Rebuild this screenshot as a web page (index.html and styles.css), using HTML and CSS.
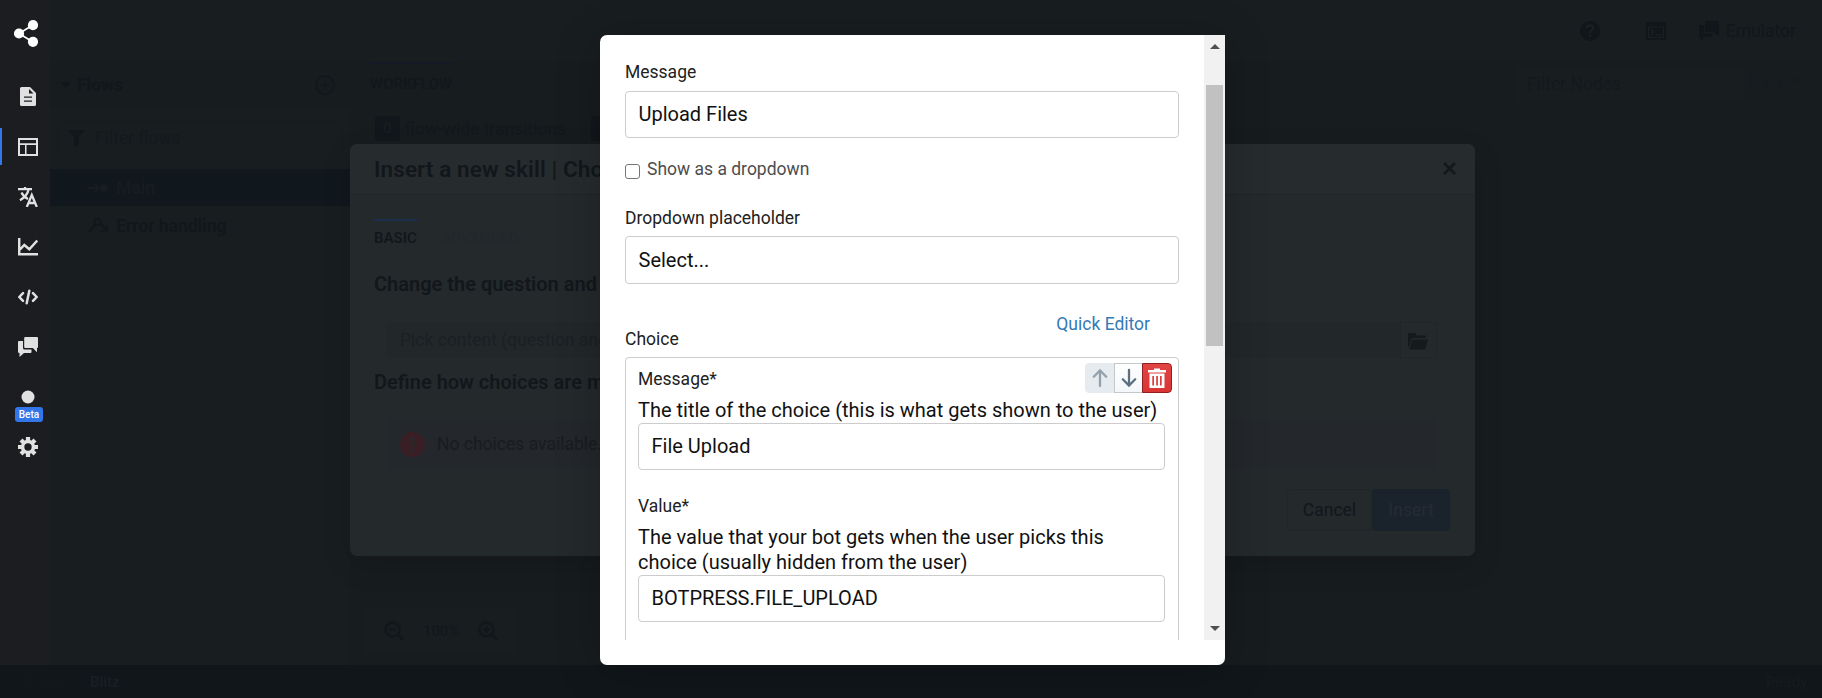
FILE: index.html
```html
<!DOCTYPE html>
<html lang="en">
<head>
<meta charset="utf-8">
<title>Flow editor</title>
<link rel="stylesheet" href="styles.css">
</head>
<body>
<div class="app">
  <div class="workspace">
    <nav class="sidebar">
      <div class="brand">
        <svg width="24" height="27" viewBox="0 0 24 27"><path d="M19 5 5 13.5l14 8.500" fill="none" stroke="#fff" stroke-width="1.700"/><circle cx="19" cy="5.200" r="5.100" fill="#fff"/><circle cx="5" cy="13.500" r="5.100" fill="#fff"/><circle cx="19" cy="21.800" r="5.100" fill="#fff"/></svg>
      </div>
      <a class="nav-item"><svg class="nav-icon" viewBox="0 0 20 20"><path fill-rule="evenodd" d="M3.500 0H12l6 6v11.500q0 1.500-1.500 1.500h-13Q2 19 2 17.500v-16Q2 0 3.500 0zM6 9.500v1.300h8V9.500zm0 4v1.300h8v-1.300z"/><path class="nav-hole" d="M11 2v4.500h4.500z"/></svg></a>
      <a class="nav-item active"><svg class="nav-icon" viewBox="0 0 20 20"><path fill-rule="evenodd" d="M0 1h20v18H0zM2 3v3.200h16V3zm0 5v9h5V8zm6.500 0v9H18V8z"/></svg></a>
      <a class="nav-item"><svg class="nav-icon" viewBox="0 0 20 20"><g fill="none" stroke="#e1e1e1" stroke-width="2.300"><path d="M0 2.200h14M7 0v2M2 13.200C6.500 10.500 9.800 7 10.500 2.500M3.500 5.500c1.300 3 3.500 5 6.500 6.500"/><path d="m8.800 20 5-12 5 12M10.500 16h6.500"/></g></svg></a>
      <a class="nav-item"><svg class="nav-icon" viewBox="0 0 20 20"><path fill="none" stroke="#e1e1e1" stroke-width="2.500" d="M1.200 1v16.300H20M2 12.500 6.300 8l5 4.300L19.300 3.500"/></svg></a>
      <a class="nav-item"><svg class="nav-icon" viewBox="0 0 20 20"><g fill="none" stroke="#e1e1e1" stroke-width="2.500" stroke-linecap="round" stroke-linejoin="round"><path d="M5 6.200 1.300 10 5 13.800M15 6.200 18.700 10 15 13.800M11.300 3.800 8.700 16.200"/></g></svg></a>
      <a class="nav-item"><svg class="nav-icon" viewBox="0 0 20 20"><path d="M7.200 0H19q1 0 1 1v9q0 1-1 1v4.200L14.800 11H7.200q-1 0-1-1V1q0-1 1-1z"/><path d="M1 4h4v7q0 1.500 1.500 1.500h7V15q0 1-1 1H6l-4.500 4V16Q0 16 0 15V5q0-1 1-1z"/></svg></a>
      <a class="nav-item"><svg class="nav-icon" viewBox="0 0 20 20"><circle cx="10" cy="10" r="6.500"/></svg><span class="beta">Beta</span></a>
      <a class="nav-item"><svg class="nav-icon" viewBox="0 0 20 20"><g stroke="#e1e1e1" stroke-width="4.200"><path d="M10 0v20M0 10h20M3 3l14 14M17 3 3 17"/></g><circle cx="10" cy="10" r="7.200"/><circle class="nav-hole" cx="10" cy="10" r="3.700"/></svg></a>
    </nav>
    <div class="content">
      <header class="topbar">
        <svg width="20" height="20" viewBox="0 0 20 20"><circle cx="10" cy="10" r="10" fill="#11161a"/><path d="M6.800 7.300c.2-4 6.600-3.700 6.400 0C13 9.300 10 9.500 10 12M10 13.500v2.500" fill="none" stroke="#1a1f23" stroke-width="2.200"/></svg>
        <svg width="20" height="20" viewBox="0 0 20 20"><path fill="#11161a" d="M0 1h20v18H0z"/><path fill="#1a1f23" fill-rule="evenodd" d="M2 5.500h16V17H2zm1 1V16h14V6.500z"/><path d="m4.500 8 3 3-3 3M10 14h6" fill="none" stroke="#1a1f23" stroke-width="1.700"/></svg>
        <div class="emulator"><svg width="20" height="20" viewBox="0 0 20 20" fill="#11161a"><path d="M7.200 0H20v15.200L14.800 11H6.200V0z"/><path d="M0 4h5v8.500h8.500V16H6l-4.500 4V16H0z"/></svg>Emulator</div>
      </header>
      <div class="columns">
        <aside class="flows">
          <div class="flows-head"><span class="caret"></span><b>Flows</b><svg width="20" height="20" viewBox="0 0 20 20"><g fill="none" stroke="#13181c" stroke-width="2"><circle cx="10" cy="10" r="9"/><path d="M10 5v10M5 10h10"/></g></svg></div>
          <div class="flow-filter"><svg width="18" height="17" viewBox="0 0 18 17"><path d="M0 0h18l-6 7v8l-5 2V7z" fill="#12171b"/></svg>Filter flows</div>
          <div class="flow-row selected"><svg width="20" height="12" viewBox="0 0 20 12"><path d="M0 6h11M7 2l4 4-4 4" fill="none" stroke="#171c20" stroke-width="2"/><circle cx="16" cy="6" r="4" fill="#171c20"/></svg>Main</div>
          <div class="flow-row"><svg width="20" height="16" viewBox="0 0 20 16"><path d="M1 14 7 7M12 5l6 7M19 7v6h-6" fill="none" stroke="#12171b" stroke-width="2"/><circle cx="9.500" cy="4" r="3" fill="none" stroke="#12171b" stroke-width="2"/></svg>Error handling</div>
        </aside>
        <main class="canvas">
          <div class="canvas-head"><span class="tab">WORKFLOW</span><div class="node-filter">Filter Nodes</div>
            <svg class="history" width="50" height="18" viewBox="0 0 50 18"><path d="M2 5h13q4 0 4 4t-4 4h-9M5 1 1 5l4 4M48 5H35q-4 0-4 4t4 4h9M45 1l4 4-4 4" fill="none" stroke="#161b1f" stroke-width="2"/></svg></div>
          <div class="transitions"><span class="count">0</span>flow-wide transitions<span class="count second">0</span></div>
          <div class="zoom">
            <svg width="20" height="20" viewBox="0 0 20 20"><g fill="none" stroke="#12171b" stroke-width="2.500"><circle cx="8.500" cy="8.500" r="7"/><path d="m13 13 6 6M5 8.500h7"/></g></svg><span>100%</span>
            <svg width="20" height="20" viewBox="0 0 20 20"><g fill="none" stroke="#12171b" stroke-width="2.500"><circle cx="8.500" cy="8.500" r="7"/><path d="m13 13 6 6M5 8.500h7M8.500 5v7"/></g></svg>
          </div>
        </main>
      </div>
    </div>
  </div>
  <footer class="statusbar"><span class="version">12.22.2</span><span class="bot">Blitz</span><span class="ready">Ready</span></footer>
</div>

<section class="skill">
  <header class="skill-head"><h2>Insert a new skill | Choice</h2><svg width="13" height="13" viewBox="0 0 13 13"><path d="m1 1 11 11M12 1 1 12" stroke="#13181b" stroke-width="2.700" fill="none"/></svg></header>
  <div class="skill-body">
    <div class="skill-tabs"><span class="skill-tab">BASIC</span><span class="skill-tab faint">ADVANCED</span></div>
    <h3>Change the question and the choices</h3>
    <div class="picker"><span class="picker-text">Pick content (question and choices)</span><span class="picker-button"><svg width="20" height="17" viewBox="0 0 20 17"><path d="M0 0h7l2 2.500h9V5H4L1 14H0z" fill="#151a1d"/><path d="M4.500 6.500H20L17 16.500H1.500z" fill="#151a1d"/></svg></span></div>
    <h3>Define how choices are matched</h3>
    <div class="alert"><svg width="25" height="25" viewBox="0 0 25 25"><circle cx="12.500" cy="12.500" r="12.500" fill="#391f25"/><path d="M12.500 5v10M12.500 17v3.500" stroke="#262a2e" stroke-width="3.500"/></svg>No choices available.</div>
    <div class="skill-actions"><span class="cancel">Cancel</span><span class="insert">Insert</span></div>
  </div>
</section>

<section class="modal">
  <div class="scroller">
    <form class="form">
      <label class="label">Message</label>
      <div class="input">Upload Files</div>
      <label class="check"><span class="box"></span>Show as a dropdown</label>
      <label class="label">Dropdown placeholder</label>
      <div class="input tall">Select...</div>
      <a class="quick">Quick Editor</a>
      <label class="label choice-label">Choice</label>
      <div class="choice">
        <div class="choice-head"><label class="label">Message*</label>
          <div class="tools">
            <span class="tool disabled"><svg width="20" height="20" viewBox="0 0 20 20"><path d="M10 18V3M3.800 8.800 10 2.500l6.200 6.300" fill="none" stroke="#93a1ac" stroke-width="2.300" stroke-linecap="round"/></svg></span>
            <span class="tool"><svg width="20" height="20" viewBox="0 0 20 20"><path d="M10 2v15M3.800 11.200 10 17.500l6.200-6.300" fill="none" stroke="#5c7080" stroke-width="2.300" stroke-linecap="round"/></svg></span>
            <span class="tool danger"><svg width="20" height="20" viewBox="0 0 20 20"><path fill="#fff" d="M1 2h6V.5h6V2h6v2.500H1z"/><path fill="#fff" fill-rule="evenodd" d="M2.500 5.500h15V20h-15zM5.300 8v9.500h1.700V8zm3.900 0v9.500h1.700V8zm3.800 0v9.500h1.700V8z"/></svg></span>
          </div>
        </div>
        <p class="hint">The title of the choice (this is what gets shown to the user)</p>
        <div class="input">File Upload</div>
        <label class="label value-label">Value*</label>
        <p class="hint">The value that your bot gets when the user picks this choice (usually hidden from the user)</p>
        <div class="input">BOTPRESS.FILE_UPLOAD</div>
      </div>
    </form>
    <div class="scrollbar"><span class="arrow up"></span><span class="thumb"></span><span class="arrow down"></span></div>
  </div>
</section>
</body>
</html>
```
FILE: styles.css
```css
* { box-sizing: border-box; }
body { margin: 0; width: 1822px; height: 698px; overflow: hidden; background: #181d20; font-family: Roboto, "Liberation Sans", sans-serif; font-size: 17.5px; color: #12171b; }
svg { display: block; flex: none; }
h2, h3, p { margin: 0; }
.app { display: flex; flex-direction: column; height: 698px; }
.workspace { display: flex; height: 665px; }
.sidebar { width: 50px; background: #1b1d21; flex: none; }
.brand { height: 72px; padding: 20px 0 0 14px; }
.nav-item { display: flex; align-items: center; position: relative; height: 37px; margin-bottom: 13px; padding-left: 15px; border-left: 3px solid transparent; }
.brand + .nav-item { margin-top: 6px; }
.nav-item.active { border-left-width: 2px; padding-left: 16px; border-color: #3276ea; }
.nav-icon { width: 20px; height: 20px; fill: #e1e1e1; }
.nav-hole { fill: #1b1d21; }
.beta { position: absolute; left: 12px; top: 29px; width: 28px; height: 15px; border-radius: 3px; background: #3276ea; color: #fff; font-size: 10px; font-weight: 500; line-height: 15px; text-align: center; }
.content { flex: 1; display: flex; flex-direction: column; }
.topbar { height: 62px; display: flex; justify-content: flex-end; align-items: center; padding-right: 26px; gap: 46px; }
.emulator { display: flex; align-items: center; gap: 7px; margin-left: -13px; }
.columns { flex: 1; display: flex; }
.flows { width: 300px; background: #181d20; }
.flows-head { display: flex; align-items: center; height: 45px; padding: 0 15px 0 11px; background: #171c1f; }
.flows-head svg { margin-left: auto; }
.caret { border: 5px solid transparent; border-top: 6px solid #11161a; border-bottom: 0; margin-right: 6px; }
.flow-filter { display: flex; align-items: center; gap: 10px; margin: 13px 7px 0 7px; height: 36px; padding-left: 9px; border: 1px solid #161b1e; border-radius: 4px; color: #14191c; }
.flow-row { display: flex; align-items: center; gap: 8px; height: 36px; padding-left: 38px; font-weight: 600; }
.flow-row svg { width: 20px; }
.flow-row.selected { margin-top: 13px; height: 37px; background: #10171d; color: #171c20; }
.flow-row + .flow-row:last-child { height: 40px; }
.canvas { flex: 1; background: #171c1f; }
.canvas-head { display: flex; align-items: flex-start; padding-left: 20px; height: 54px; }
.tab { width: 82px; padding-top: 9px; border-top: 2px solid #131a25; font-size: 15px; line-height: 22px; font-weight: 600; }
.node-filter { width: 228px; height: 36px; line-height: 36px; margin: 4px 5px 0 1063px; padding-left: 12px; background: #181d20; border-radius: 4px; color: #14191c; }
.history { margin-top: 13px; }
.transitions { display: flex; align-items: center; height: 25px; padding-left: 25px; gap: 5px; color: #13181b; }
.count { width: 25px; height: 25px; border-radius: 4px; background: #12171c; color: #181d21; text-align: center; line-height: 25px; font-weight: 500; font-size: 15px; }
.count.second { margin-left: 20px; }
.zoom { display: flex; align-items: center; gap: 19px; width: 150px; height: 45px; margin: 467px 0 0 15px; padding-left: 19px; background: #181d20; font-size: 15px; }
.statusbar { flex: 1; display: flex; align-items: center; background: #11161a; color: #191e24; font-size: 15px; font-weight: 500; padding-left: 16px; }
.version { width: 74px; font-weight: 400; color: #13181b; }
.ready { margin-left: auto; padding-right: 15px; color: #161b1f; font-weight: 400; }

.skill { position: absolute; left: 350px; top: 144px; width: 1125px; height: 412px; border-radius: 7px; background: #24292c; overflow: hidden; box-shadow: 0 10px 30px rgba(0, 0, 0, .12); }
.skill-head { display: flex; justify-content: space-between; align-items: center; height: 51px; padding: 0 19px 1px 24px; background: #262b2e; border-bottom: 1px solid #202529; }
.skill-head h2 { font-size: 22.500px; font-weight: 600; letter-spacing: .1px; }
.skill-body { display: flex; flex-direction: column; padding: 24px 25px 24px 24px; }
.skill-tabs { display: flex; gap: 25px; margin-bottom: 20px; }
.skill-tab { padding-top: 6px; border-top: 2px solid #1b2e4d; font-size: 15px; line-height: 22px; font-weight: 600; }
.skill-tab.faint { border-color: transparent; color: #22272b; font-weight: 400; }
.skill h3 { font-size: 20px; line-height: 30px; font-weight: 600; }
.picker { display: flex; margin: 23px 13px 9px; height: 36px; background: #22272a; border-radius: 4px; }
.picker-text { flex: 1; line-height: 37px; padding-left: 13px; color: #1b2023; }
.picker-button { width: 37px; padding: 10px 7px; background: #24292c; border: 1px solid #202528; border-radius: 0 4px 4px 0; }
.alert { display: flex; align-items: center; gap: 12px; height: 50px; margin: 22px 13px 0; padding-left: 13px; border-radius: 4px; background: #24272b; color: #191c20; }
.skill-actions { display: flex; justify-content: flex-end; margin-top: 20px; line-height: 42px; text-align: center; }
.cancel { width: 85px; height: 42px; line-height: 40px; border: 1px solid #202529; border-radius: 4px; }
.insert { width: 78px; height: 42px; border-radius: 4px; background: #1a222c; color: #232a33; font-weight: 500; }

.modal { position: absolute; left: 600px; top: 35px; width: 625px; height: 630px; border-radius: 7px; background: #fff; color: #182026; box-shadow: 0 5px 45px rgba(0, 0, 10, .22); overflow: visible; }
.scroller { display: flex; height: 605px; overflow: hidden; border-top-left-radius: 7px; }
.form { width: 604px; padding: 25px 25px 0; display: flex; flex-direction: column; flex: none; }
.label { display: block; line-height: 24px; color: #212121; }
.input { height: 47px; margin-top: 7px; padding-left: 12.500px; border: 1px solid #ccc; border-radius: 4px; font-size: 20px; line-height: 44px; color: #111; flex: none; }
.check { display: flex; margin: 19px 0 25px; line-height: 24px; color: #4d4d4d; }
.box { width: 15px; height: 15px; margin: 7px 7px 0 0; border: 1px solid #767676; border-radius: 3px; }
.tall { height: 48px; line-height: 46px; margin-top: 6px; }
.quick { align-self: flex-end; margin: 28px 29px 0 0; line-height: 24px; color: #337ab7; }
.choice-label { margin-top: -9px; }
.choice { flex: none; height: 310px; margin-top: 6px; padding: 5px 13px 0 12px; border: 1px solid #ccc; border-radius: 4px; }
.choice-head { display: flex; justify-content: space-between; height: 35px; }
.choice-head .label { padding-top: 4px; }
.tools { display: flex; height: 30px; margin-right: -7px; }
.tool { width: 29px; padding: 4px 4px; border: 1px solid #c3c8cc; background: linear-gradient(#fff, #f4f7f9); }
.tool.disabled { border-color: #e6ebef; background: #e6ebef; border-radius: 4px 0 0 4px; }
.tool.danger { padding-left: 4px; width: 30px; margin-left: -1px; background: linear-gradient(#e04444, #d93535); border-color: #951f1f; border-radius: 0 4px 4px 0; }
.hint { font-size: 20px; line-height: 25px; color: #111; }
.choice .input { margin-top: 0; }
.choice .value-label { margin: 24px 0 7px; }
.scrollbar { display: flex; flex-direction: column; align-items: center; width: 21px; height: 605px; background: #f1f1f1; }
.arrow { border: 5px solid transparent; }
.up { margin-top: 9px; border-top: 0; border-bottom-color: #505050; }
.thumb { width: 17px; height: 261px; margin-top: 36px; background: #c1c1c1; }
.down { margin: auto 0 9px; border-bottom: 0; border-top-color: #505050; }
```
